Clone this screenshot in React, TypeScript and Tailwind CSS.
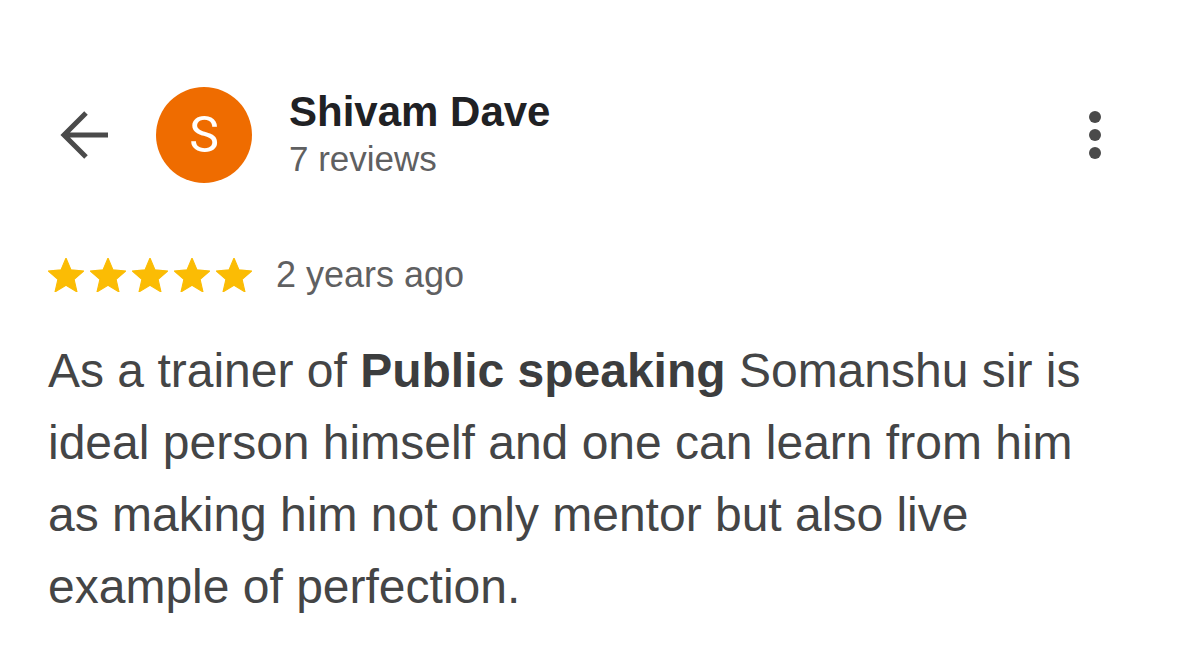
const Star = () => (
  <svg width="36" height="34" viewBox="2 2 20 19" className="shrink-0">
    <path
      d="M12 17.27L18.18 21l-1.64-7.03L22 9.24l-7.19-.61L12 2 9.19 8.63 2 9.24l5.46 4.73L5.82 21z"
      fill="#fbbc04"
      stroke="#fbbc04"
      strokeWidth="0.6"
      strokeLinejoin="round"
    />
  </svg>
);

export default function App() {
  return (
    <div className="w-full h-[648px] bg-white font-['Liberation_Sans',Arial,sans-serif] overflow-hidden">
      {/* Header */}
      <div className="flex items-center mt-[87px] pl-[60px] pr-[78px] h-[96px]">
        <svg width="48" height="48" viewBox="0 0 48 48" className="shrink-0">
          <path d="M48 24H4 M26 2L4 24L26 46" fill="none" stroke="#4a4a4a" strokeWidth="5" />
        </svg>
        <div className="ml-[48px] w-[96px] h-[96px] rounded-full bg-[#ef6c00] flex items-center justify-center shrink-0">
          <span className="text-white text-[50px] font-['Roboto',sans-serif] leading-none">S</span>
        </div>
        <div className="ml-[37px] self-start pt-[1px] flex-1">
          <div className="text-[42px] leading-[48px] font-bold text-[#202124]">Shivam Dave</div>
          <div className="text-[35px] leading-[40px] mt-[3px] text-[#5f6061]">7 reviews</div>
        </div>
        <div className="flex flex-col gap-[6px]">
          <span className="w-[12px] h-[12px] rounded-full bg-[#4a4a4a]" />
          <span className="w-[12px] h-[12px] rounded-full bg-[#4a4a4a]" />
          <span className="w-[12px] h-[12px] rounded-full bg-[#4a4a4a]" />
        </div>
      </div>

      {/* Rating row */}
      <div className="flex items-center mt-[74px] pl-[48px] h-[36px]">
        <div className="flex gap-[6px]">
          <Star />
          <Star />
          <Star />
          <Star />
          <Star />
        </div>
        <span className="ml-[24px] text-[36px] leading-[40px] text-[#5f6061]">2 years ago</span>
      </div>

      {/* Review body */}
      <p className="mt-[42px] pl-[48px] pr-[89px] text-[48px] leading-[72px] text-[#444546]">
        As a trainer of <span className="font-bold text-[#3c3d3e]">Public speaking</span> Somanshu sir is
        ideal person himself and one can learn from him as making him not only mentor but also live
        example of perfection.
      </p>
    </div>
  );
}
